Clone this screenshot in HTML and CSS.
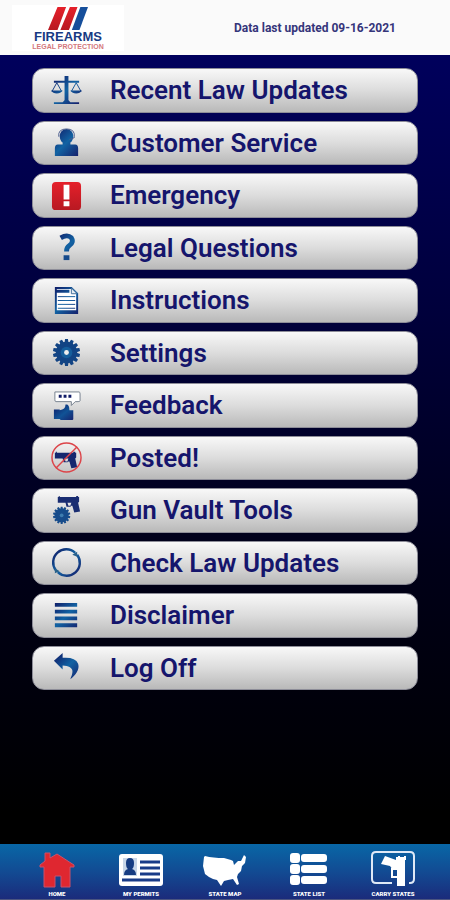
FILE: index.html
```html
<!DOCTYPE html>
<html lang="en">
<head>
<meta charset="utf-8">
<meta name="viewport" content="width=device-width, initial-scale=1">
<title>Firearms Legal Protection</title>
<link rel="stylesheet" href="styles.css">
</head>
<body>
<svg class="defs" aria-hidden="true">
  <defs>
    <linearGradient id="blue" x1="0" y1="0" x2="1" y2="1"><stop offset="0" stop-color="#0d1765"/><stop offset=".55" stop-color="#105396"/><stop offset="1" stop-color="#17246f"/></linearGradient>
    <linearGradient id="sheen" gradientUnits="userSpaceOnUse" x1="2" y1="2" x2="30" y2="30"><stop offset="0" stop-color="#101763"/><stop offset=".5" stop-color="#1263a3"/><stop offset="1" stop-color="#151b68"/></linearGradient>
    <linearGradient id="red" x1="0" y1="0" x2="0" y2="1"><stop offset="0" stop-color="#e5202a"/><stop offset="1" stop-color="#b81922"/></linearGradient>
    <path id="pistol" fill-rule="evenodd" d="M0 1h1V0h1v1h17V0h2v1h1v5l-1 1 2 9-6 1-2-7h-1l-1 1H9L8 7H0zM10 7l1 3h2l1-3z"/>
    <g id="gear"><circle r="11"/><path id="tooth" d="M-2.400-8L-1.500-14h3L2.400-8zM-2.400 8L-1.500 14h3L2.400 8z"/><use href="#tooth" transform="rotate(25.710)"/><use href="#tooth" transform="rotate(51.430)"/><use href="#tooth" transform="rotate(77.140)"/><use href="#tooth" transform="rotate(102.860)"/><use href="#tooth" transform="rotate(128.570)"/><use href="#tooth" transform="rotate(154.290)"/></g>
  </defs>
</svg>

<header class="top">
  <div class="logo">
    <svg class="bars" viewBox="0 0 42 24" aria-hidden="true"><path fill="url(#red)" d="M10 0h9l-9 24H0zM23 0h8l-9 24h-9z"/><path fill="#164f9b" d="M34 0h8l-9 24h-8z"/></svg>
    <span class="brand">FIREARMS</span>
    <span class="tagline">LEGAL PROTECTION</span>
  </div>
  <p class="updated">Data last updated 09-16-2021</p>
</header>

<main class="menu">
  <button type="button" class="item"><svg viewBox="0 0 32 32"><g fill="none" stroke="url(#sheen)"><path stroke-width="4" d="M16 1v27"/><path stroke-width="1" d="M6 8L1 17M6 8l5 9M26 8l-5 9M26 8l5 9"/></g><path fill="url(#sheen)" d="M3 6h26v2H3zM0 16h12q-2 3-6 3t-6-3zM20 16h12q-2 3-6 3t-6-3zM3 28h9l2-2h4l2 2h9v2H3z"/></svg><span>Recent Law Updates</span></button>
  <button type="button" class="item"><svg viewBox="0 0 32 32"><path fill="url(#sheen)" d="M9 9a7 7 0 0 1 14 0q0 5-3 7v2h5q3 0 3 4v8H4v-8q0-4 3-4h5v-2q-3-2-3-7z"/><path fill="none" stroke="#4a5c8c" d="M8 10q-1-8 8-8t8 8v1l-5 2"/></svg><span>Customer Service</span></button>
  <button type="button" class="item"><svg viewBox="0 0 32 32"><rect x="1" y="2" width="30" height="29" rx="4" fill="url(#red)"/><path fill="#fff" d="M13 5h6v15h-6zM13 22h6v5h-6z"/></svg><span>Emergency</span></button>
  <button type="button" class="item"><svg viewBox="0 0 32 32"><path fill="none" stroke="url(#sheen)" stroke-width="5" d="M10 6q7-4 11 0c2 3 1 6-2 8q-3 2-3 6"/><path fill="#164a8b" d="M13 24h6v5h-6z"/></svg><span>Legal Questions</span></button>
  <button type="button" class="item"><svg viewBox="0 0 32 32"><path fill="#fff" stroke="url(#sheen)" stroke-width="2" d="M5 3h16l6 6v20H5z"/><path fill="url(#sheen)" d="M5 5h14v3H5zM5 26h22v3H5z"/><path fill="none" stroke="url(#sheen)" d="M7 12h18M7 16h18M7 20h18M7 24h18"/><path fill="#e5edf3" stroke="#41709d" d="M21 3v6h6z"/></svg><span>Instructions</span></button>
  <button type="button" class="item"><svg viewBox="0 0 32 32"><use href="#gear" x="16" y="16" fill="#124484"/><circle cx="16" cy="16" r="6" fill="#155e9c"/><circle cx="16" cy="16" r="2.500" fill="#eee"/></svg><span>Settings</span></button>
  <button type="button" class="item"><svg viewBox="0 0 32 32"><path fill="#fff" stroke="#77818e" d="M4 2h25q1 0 1 2v7q0 1-2 1h-3l-4 4v-4H5q-1 0-1-2z"/><path fill="#101b66" d="M8 5h3v3H8zM13 5h3v3h-3zM18 5h3v3h-3z"/><path fill="url(#blue)" d="M3 20h6v1q6-1 6-6 4-1 4 6h4v9q0 1-1 1H10l-1-1H3z"/></svg><span>Feedback</span></button>
  <button type="button" class="item"><svg viewBox="0 0 32 32"><use href="#pistol" x="4" y="10" fill="#15286f"/><g fill="none" stroke="#dc4449" stroke-width="1.500"><circle cx="16" cy="16" r="15"/><path d="M5 27L27 5"/></g></svg><span>Posted!</span></button>
  <button type="button" class="item"><svg viewBox="0 0 32 32"><use href="#pistol" x="7" y="1" fill="#192c71"/><g transform="translate(11 21) scale(.640)"><use href="#gear" fill="#174c8b"/><circle r="3" fill="#3e7db0"/></g></svg><span>Gun Vault Tools</span></button>
  <button type="button" class="item"><svg viewBox="0 0 32 32"><g fill="none" stroke="url(#sheen)" stroke-width="2.500"><path d="M5 24A13.500 13.500 0 0 1 25 6M27 8A13.500 13.500 0 0 1 7 26"/></g><path fill="#28618b" d="M22 8l5-3v5zM4 22l5 3-5 2z"/></svg><span>Check Law Updates</span></button>
  <button type="button" class="item"><svg viewBox="0 0 32 32"><path fill="url(#sheen)" d="M4 3h23v4H4zM4 10h23v4H4zM4 17h23v4H4zM4 24h23v4H4z"/></svg><span>Disclaimer</span></button>
  <button type="button" class="item"><svg viewBox="0 0 32 32"><path fill="url(#sheen)" d="M3 9l9-8v5q13-1 16 6c2 6-3 12-8 16 3-7 5-13-8-14v4z"/></svg><span>Log Off</span></button>
</main>

<nav class="tabs">
  <a href="#home"><svg viewBox="0 0 44 36"><path fill="#df2730" stroke="#c9506b" d="M22 2l17 11v2h-4v20h-9V24h-6v11H9V15H5v-2l5-4V1h5v5z"/></svg><span>HOME</span></a>
  <a href="#permits"><svg viewBox="0 0 44 36"><rect y="2" width="44" height="32" rx="3" fill="#fff"/><g fill="none" stroke="#183b88" stroke-width="3"><path d="M21 10h20M21 16h20M21 22h20M3 28h38"/></g><path fill="#c8d6e8" d="M4 6h14v18H4z"/><path fill="#163c82" d="M7 11q0-5 4-5t4 5-2 6q4 1 4 6H5q0-5 4-6-2-1-2-6z"/></svg><span>MY PERMITS</span></a>
  <a href="#map"><svg viewBox="0 0 44 36"><path fill="#fff" d="M1 5l1-1q8 2 19 2l7 2 2 1 1 4 4-4h3l3-6 2 2-1 6-3 3-1 5-3 3-1 3 2 7-2 1-4-6-5 1-4 1-3 5-4-6-4-1-4-2-4-3-2-8z"/></svg><span>STATE MAP</span></a>
  <a href="#list"><svg viewBox="0 0 44 36"><g fill="#fff"><rect x="3" y="1" width="10" height="10" rx="3"/><rect x="14" y="2" width="26" height="8" rx="3"/><rect x="3" y="12" width="10" height="10" rx="3"/><rect x="14" y="13" width="26" height="8" rx="3"/><rect x="3" y="23" width="10" height="10" rx="3"/><rect x="14" y="24" width="26" height="8" rx="3"/></g></svg><span>STATE LIST</span></a>
  <a href="#carry"><svg viewBox="0 0 44 36"><path fill="none" stroke="#dfe9f6" stroke-width="2" d="M21 31H5q-4 0-4-4V4q0-4 4-4h34q4 0 4 4v23q0 4-4 4h-1"/><path fill="#fff" d="M14 4l11 4V5h2V4h2v1h4V4h2v4h-1v26h-8V18h-4l-3-4-9-2z"/><path fill="none" stroke="#fff" stroke-width="2" d="M21 16v9h6"/></svg><span>CARRY STATES</span></a>
</nav>
</body>
</html>
```
FILE: styles.css
```css
* { box-sizing: border-box; }

body {
  margin: 0;
  min-height: 100vh;
  display: flex;
  flex-direction: column;
  font-family: Roboto, "Liberation Sans", sans-serif;
  background: #000;
}

.defs {
  position: absolute;
  width: 0;
  height: 0;
}

.top {
  display: flex;
  align-items: center;
  justify-content: space-between;
  height: 55px;
  padding: 0 54px 0 12px;
  background: #fafafa;
}

.logo {
  display: flex;
  flex-direction: column;
  align-items: center;
  width: 112px;
  height: 46px;
  padding-top: 2px;
  background: #fff;
}

.bars {
  flex: none;
  width: 40px;
  height: 23px;
}

.brand {
  font: 700 13px/13px "Liberation Sans", sans-serif;
  color: #173a83;
}

.tagline {
  font: 700 7px/8px "Liberation Sans", sans-serif;
  color: #d4777c;
}

.updated {
  margin: 0;
  font-size: 12px;
  font-weight: 700;
  color: #35357a;
}

.menu {
  flex: 1;
  display: grid;
  grid-auto-rows: 1fr;
  gap: 8px;
  padding: 13px 32px 154px;
  background: linear-gradient(#00005c, #00003c 32%, #000018 64%, #000 96%);
}

.item {
  display: flex;
  align-items: center;
  gap: 28px;
  min-height: 44px;
  padding: 0 18px;
  border: 1px solid #8d8d98;
  border-radius: 12px;
  background: linear-gradient(#f8f8f8, #dcdcdc 50%, #b9b9b9);
  font-family: inherit;
  font-size: 26px;
  font-weight: 600;
  line-height: 32px;
  color: #15156c;
  text-align: left;
  cursor: pointer;
}

.item svg {
  flex: none;
  width: 31px;
  height: 31px;
}

.tabs {
  display: grid;
  grid-template-columns: repeat(5, 1fr);
  height: 56px;
  padding: 8px 15px 0;
  border-bottom: 1px solid #4b5580;
  background: linear-gradient(#0867a6, #124b93 50%, #1b2b7b);
}

.tabs a {
  display: flex;
  flex-direction: column;
  align-items: center;
  font-size: 6px;
  font-weight: 900;
  line-height: 8px;
  color: #fff;
  text-decoration: none;
  white-space: nowrap;
}

.tabs svg {
  width: 44px;
  height: 36px;
  margin-bottom: 2px;
  overflow: visible;
}
```
